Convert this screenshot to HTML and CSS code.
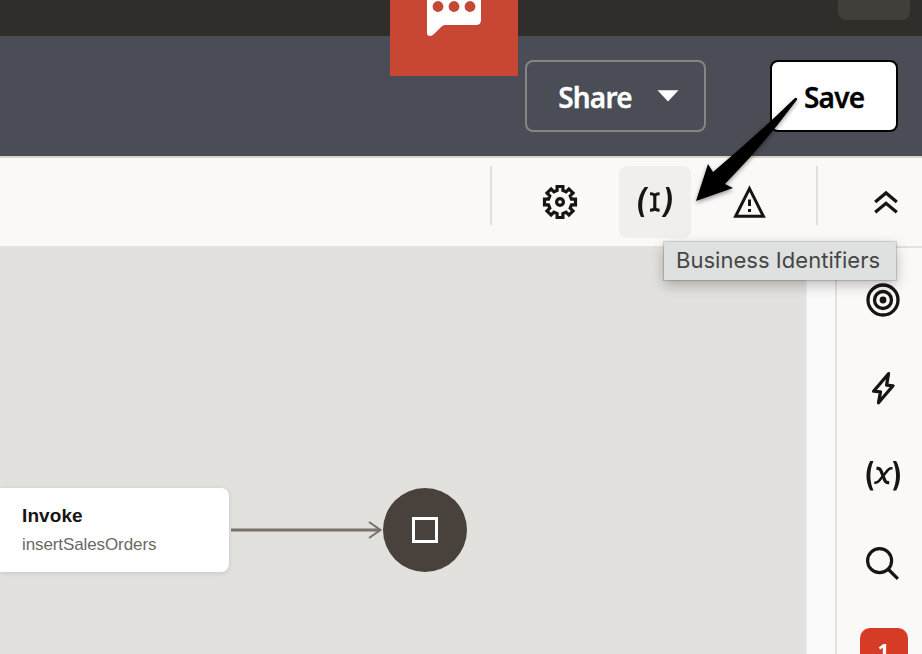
FILE: index.html
```html
<!DOCTYPE html>
<html lang="en">
<head>
<meta charset="utf-8">
<title>Integration</title>
<link rel="stylesheet" href="styles.css">
</head>
<body>
<div class="app">
  <div class="topbar"><div class="topbar-tab"></div></div>
  <header class="header">
    <button class="btn share"><span class="label">Share</span><svg width="22" height="12" viewBox="0 0 22 12"><path d="M.5 .3H21.5L11 11.5Z" fill="#fff"/></svg></button>
    <button class="btn save"><span class="label">Save</span></button>
  </header>
  <div class="toolbar">
    <i class="divider"></i>
    <span class="tool gear"><svg width="36" height="36" viewBox="-18 -18 36 36" fill="none" stroke="#161513" stroke-width="3.2"><path d="M-2.9-11.5V-15.5H2.9V-11.5L6.08-10.18 8.91-13.01 13.01-8.91 10.18-6.08 11.5-2.9H15.5V2.9H11.5L10.18 6.08 13.01 8.91 8.91 13.01 6.08 10.18 2.9 11.5V15.5H-2.9V11.5L-6.08 10.18-8.91 13.01-13.01 8.91-10.18 6.08-11.5 2.9H-15.5V-2.9H-11.5L-10.18-6.08-13.01-8.91-8.91-13.01-6.08-10.18Z"/><circle r="3.4"/></svg></span>
    <span class="tool active"><svg width="36" height="36" viewBox="0 0 36 36" fill="#161513"><path d="M7.700 3H11.300C4.500 12.500 3.600 23 7.300 33H4C-.8 24 .3 12 7.700 3Z"/><path d="M28.300 33H24.700C31.500 23.500 32.400 13 28.700 3H32C36.800 12 35.700 24 28.300 33Z"/><path d="M13 9.700C15.500 9.700 17.800 10 17.800 12.700V23.300C17.800 26 15.500 26.300 13 26.300M22.600 9.700C20.100 9.700 17.800 10 17.800 12.700M17.800 23.300C17.800 26 20.100 26.300 22.600 26.300" fill="none" stroke="#161513" stroke-width="3.100"/></svg></span>
    <span class="tool warn"><svg width="36" height="36" viewBox="0 0 36 36"><path d="M18.500 4.700L32.400 32.300H4.600Z" fill="none" stroke="#161513" stroke-width="3"/><path d="M17 15.500h3v6.500h-3zM17 25h3v3h-3z" fill="#161513"/></svg></span>
    <i class="divider second"></i>
    <span class="tool collapse"><svg width="24" height="24" viewBox="0 0 24 24" fill="none" stroke="#161513" stroke-width="3.300"><path d="M1.200 12L12 3 22.800 12M1.200 22.300L12 13.300 22.800 22.300"/></svg></span>
  </div>
  <main class="work">
    <section class="canvas">
      <div class="node"><strong>Invoke</strong><span>insertSalesOrders</span></div>
      <svg class="edge" width="152" height="20" viewBox="0 0 152 20" fill="none" stroke="#7b716b"><path d="M0 10H149" stroke-width="3"/><path d="M138 2L149.500 10 138 18" stroke-width="2"/></svg>
      <div class="stop"><i></i></div>
    </section>
    <div class="gutter"></div>
    <aside class="side">
      <svg width="36" height="36" viewBox="-18 -18 36 36" fill="none" stroke="#161513" stroke-width="3.300"><circle r="15"/><circle r="8.500"/><circle r="3.400" fill="#161513" stroke="none"/></svg>
      <svg width="36" height="36" viewBox="0 0 36 36" fill="none" stroke="#161513" stroke-width="3.300" stroke-linejoin="round"><path d="M23.500 3.700L8.600 21.200 15.500 21.800 13.500 32.800 28 15.800 21.600 15.200Z"/></svg>
      <svg width="36" height="36" viewBox="0 0 36 36" fill="#161513"><path d="M5.200 3H8.500C4.300 12.500 4.300 23 8.500 32.500H5.200C.2 23 .2 12.500 5.200 3ZM31.200 3H27.900C32.100 12.500 32.100 23 27.900 32.500H31.200C36.200 23 36.200 12.500 31.200 3Z"/><path d="M11.500 10.300H12.700C14.500 10.300 15.300 11.200 15.900 12.700L19.800 22.300C20.400 24 21.400 24.700 23 24.700H24.200" fill="none" stroke="#161513" stroke-width="3.200"/><path d="M27.500 10.300H26.500C24.900 10.300 23.800 11 22.800 12.200L14.100 22.800C13 24.200 12 24.700 10.400 24.700H9.200" fill="none" stroke="#161513" stroke-width="2.600"/></svg>
      <svg width="36" height="36" viewBox="0 0 36 36" fill="none" stroke="#161513" stroke-width="3.200"><circle cx="14.600" cy="14.700" r="12"/><path d="M23 23L32.900 32.900"/></svg>
      <div class="count">1</div>
    </aside>
  </main>
  <div class="chat"><svg width="128" height="76" viewBox="0 0 128 76"><path d="M37-10H91V20Q91 25 86 25H55Q53 25 51 27L44 34Q42 36 40 36Q37 36 37 33Z" fill="#fff"/><g fill="#c74634"><circle cx="48" cy="6.500" r="5.400"/><circle cx="64" cy="6.500" r="5.400"/><circle cx="80" cy="6.500" r="5.400"/></g></svg></div>
  <div class="tooltip">Business Identifiers</div>
  <svg class="pointer" width="112" height="114" viewBox="690 94 112 114"><path d="M795 98Q797 97 797.200 99.500Q765 143 725 184L733 188 696 201 708 164 713 172Q757 135 795 98Z" fill="#000"/></svg>
</div>
</body>
</html>
```
FILE: styles.css
```css
* { box-sizing: border-box; }
body { margin: 0; overflow: hidden; }
.app { position: relative; width: 922px; height: 654px; display: flex; flex-direction: column; overflow: hidden; background: #fbf9f8; font-family: "Noto Sans", sans-serif; }
.topbar { flex: 0 0 36px; background: #312d2a; display: flex; justify-content: flex-end; padding-right: 12px; }
.topbar-tab { width: 72px; height: 20px; background: #423e3a; border-radius: 0 0 8px 8px; }
.header { flex: 0 0 122px; background: #4a4d55; border-bottom: 2px solid #d7d6c6; display: flex; justify-content: flex-end; padding: 24px 24px 0 0; gap: 64px; }
.btn { height: 72px; border-radius: 8px; border: 2px solid #858585; background: transparent; color: #fff; font: 600 28px/36px "Noto Sans", sans-serif; display: flex; align-items: center; padding: 0; }
.share { width: 181px; padding-left: 31px; gap: 25px; }
.share .label { width: 74px; }
.save { width: 128px; background: #fff; border-color: #000; color: #000; padding-left: 32px; }
.label { white-space: nowrap; letter-spacing: -0.8px; padding-top: 2px; -webkit-text-stroke: 0.3px; }
.toolbar { flex: 0 0 88px; display: flex; align-items: flex-start; padding: 8px 0 0 490px; }
.divider { width: 2px; height: 59px; background: #e1dfdd; }
.tool { width: 72px; height: 72px; border-radius: 8px; display: flex; align-items: center; justify-content: center; }
.gear { margin-left: 32px; }
.active { margin-left: 23px; background: #f0efee; }
.warn { margin-left: 22px; }
.second { margin-left: 31px; }
.collapse { margin-left: 32px; }
.work { flex: 1; display: flex; min-height: 0; }
.canvas { width: 807px; border-right: 2px solid #e8e7e5; background: #e2e1dd; display: flex; align-items: flex-start; padding-top: 241.5px; }
.node { width: 229px; height: 84px; border-radius: 0 8px 8px 0; background: #fff; box-shadow: 0 1px 5px rgba(0,0,0,.12); padding: 17.5px 0 0 22px; display: flex; flex-direction: column; font-family: "Liberation Sans", sans-serif; }
.node strong { color: #161513; font-size: 19px; line-height: 22px; letter-spacing: 0.1px; }
.node span { color: #6b6966; font-size: 17px; line-height: 20px; margin-top: 8px; letter-spacing: -0.1px; }
.edge { margin: 32px 0 0 2px; }
.stop { width: 84px; height: 84px; border-radius: 50%; background: #48413c; display: flex; align-items: center; justify-content: center; }
.stop i { width: 26px; height: 26px; border: 3px solid #fff; }
.gutter { width: 30px; border-right: 2px solid #e3e1df; background: #fafafa; }
.side { flex: 1; border-top: 2px solid #e3e1df; display: flex; flex-direction: column; align-items: center; padding: 34px 0 0 8px; gap: 52px; }
.side svg { flex: 0 0 36px; margin-right: 1px; }
.count { flex: 0 0 48px; width: 48px; border-radius: 10px; background: #d63b25; color: #fff; font-size: 20px; font-weight: 700; line-height: 45px; text-align: center; margin-top: -6px; }
.chat { position: absolute; left: 390px; top: 0; width: 128px; height: 76px; background: #c74634; }
.tooltip { position: absolute; left: 664px; top: 242px; width: 232px; height: 38px; background: #dee1df; color: #454746; font: 400 22px/37px Inter, sans-serif; letter-spacing: 0.03px; padding-left: 12px; white-space: nowrap; box-shadow: 0 0 1px 1px rgba(0,0,0,.15), 0 5px 14px rgba(0,0,0,.25); }
.pointer { position: absolute; left: 690px; top: 94px; filter: drop-shadow(0 2px 2px rgba(0,0,0,.4)); }
```
